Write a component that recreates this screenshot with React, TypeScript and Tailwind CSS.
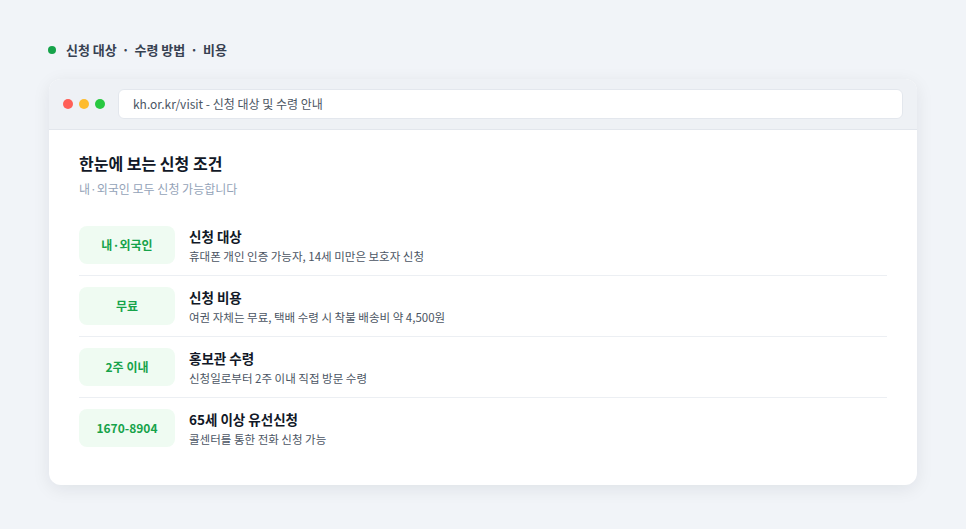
import React from "react";

const rows = [
  { badge: "내·외국인", title: "신청 대상", desc: "휴대폰 개인 인증 가능자, 14세 미만은 보호자 신청" },
  { badge: "무료", title: "신청 비용", desc: "여권 자체는 무료, 택배 수령 시 착불 배송비 약 4,500원" },
  { badge: "2주 이내", title: "홍보관 수령", desc: "신청일로부터 2주 이내 직접 방문 수령" },
  { badge: "1670-8904", title: "65세 이상 유선신청", desc: "콜센터를 통한 전화 신청 가능" },
];

export default function App() {
  return (
    <div
      className="w-[966px] h-[529px] bg-[#f1f4f8] px-[48px] pt-[41px]"
      style={{ fontFamily: '"Noto Sans CJK KR", "Noto Sans", sans-serif' }}
    >
      <div className="flex items-center gap-[10px] h-[17px]">
        <span className="w-[8px] h-[8px] rounded-full bg-[#16a34a]" />
        <div className="flex items-center gap-[5px] text-[13px] font-bold text-[#374151] leading-none">
          <span>신청 대상</span>
          <span>·</span>
          <span>수령 방법</span>
          <span>·</span>
          <span>비용</span>
        </div>
      </div>
      <div className="mt-[21px] ml-[1px] w-[868px] bg-white rounded-[12px] overflow-hidden shadow-[0_4px_18px_rgba(15,23,42,0.08)]">
        <div className="h-[51px] bg-[#eef1f5] border-b border-[#e2e6ec] flex items-center pl-[14px] pr-[14px] gap-[13px]">
          <div className="flex items-center gap-[6px]">
            <span className="w-[10px] h-[10px] rounded-full bg-[#ff5f57]" />
            <span className="w-[10px] h-[10px] rounded-full bg-[#febc2e]" />
            <span className="w-[10px] h-[10px] rounded-full bg-[#28c840]" />
          </div>
          <div className="flex-1 h-[30px] bg-white rounded-[6px] border border-[#e3e7ed] flex items-center pl-[14px] text-[12px] text-[#4b5563]">
            kh.or.kr/visit - 신청 대상 및 수령 안내
          </div>
        </div>
        <div className="px-[30px] pt-[22px] pb-[27px]">
          <div className="text-[16px] font-bold text-[#111827] leading-[22px]">한눈에 보는 신청 조건</div>
          <div className="mt-[7px] text-[12px] text-[#94a3b8] leading-[16px]">내·외국인 모두 신청 가능합니다</div>
          <div className="mt-[18px] flex flex-col">
            {rows.map((r, i) => (
              <div
                key={i}
                className={`flex items-center gap-[14px] py-[11px] ${i < rows.length - 1 ? "border-b border-[#eceff3]" : ""}`}
              >
                <div className="w-[96px] h-[38px] rounded-[8px] bg-[#effbf2] flex items-center justify-center text-[12px] font-bold text-[#16a34a]">
                  {r.badge}
                </div>
                <div className="flex flex-col">
                  <div className="text-[13.5px] font-bold text-[#111827] leading-[18px]">{r.title}</div>
                  <div className="mt-[3px] text-[11.5px] text-[#4b5563] leading-[16px]">{r.desc}</div>
                </div>
              </div>
            ))}
          </div>
        </div>
      </div>
    </div>
  );
}
